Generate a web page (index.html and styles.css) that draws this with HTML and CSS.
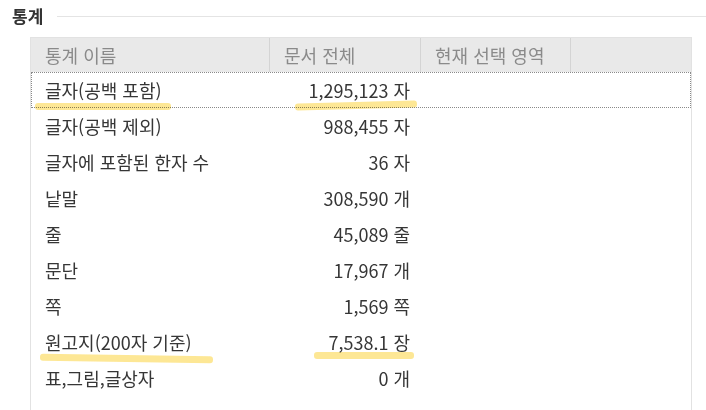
FILE: index.html
```html
<!DOCTYPE html>
<html lang="ko">
<head>
<meta charset="utf-8">
<title>통계</title>
<link rel="stylesheet" href="styles.css">
</head>
<body>
<section class="stats">
  <div class="title-row">
    <h2 class="title">통계</h2>
    <div class="title-line"></div>
  </div>
  <div class="table">
    <div class="head">
      <div class="hcell">통계 이름</div>
      <div class="hcell">문서 전체</div>
      <div class="hcell">현재 선택 영역</div>
      <div class="hcell last"></div>
    </div>
    <div class="row focused">
      <div class="cell name">글자(공백 포함)</div>
      <div class="cell val">1,295,123 자</div>
      <div class="cell"></div>
      <div class="cell"></div>
      <span class="mark mark-a"></span>
      <span class="mark mark-b"></span>
    </div>
    <div class="row">
      <div class="cell name">글자(공백 제외)</div>
      <div class="cell val">988,455 자</div>
      <div class="cell"></div>
      <div class="cell"></div>
    </div>
    <div class="row">
      <div class="cell name">글자에 포함된 한자 수</div>
      <div class="cell val">36 자</div>
      <div class="cell"></div>
      <div class="cell"></div>
    </div>
    <div class="row">
      <div class="cell name">낱말</div>
      <div class="cell val">308,590 개</div>
      <div class="cell"></div>
      <div class="cell"></div>
    </div>
    <div class="row">
      <div class="cell name">줄</div>
      <div class="cell val">45,089 줄</div>
      <div class="cell"></div>
      <div class="cell"></div>
    </div>
    <div class="row">
      <div class="cell name">문단</div>
      <div class="cell val">17,967 개</div>
      <div class="cell"></div>
      <div class="cell"></div>
    </div>
    <div class="row">
      <div class="cell name">쪽</div>
      <div class="cell val">1,569 쪽</div>
      <div class="cell"></div>
      <div class="cell"></div>
    </div>
    <div class="row">
      <div class="cell name">원고지(200자 기준)</div>
      <div class="cell val">7,538.1 장</div>
      <div class="cell"></div>
      <div class="cell"></div>
      <span class="mark mark-c"></span>
      <span class="mark mark-d"></span>
    </div>
    <div class="row">
      <div class="cell name">표,그림,글상자</div>
      <div class="cell val">0 개</div>
      <div class="cell"></div>
      <div class="cell"></div>
    </div>
  </div>
</section>
</body>
</html>
```

FILE: styles.css
```css
html, body {
  margin: 0;
  padding: 0;
  background: #ffffff;
  height: 410px;
  overflow: hidden;
}

body {
  font-family: "Noto Sans CJK KR", "Noto Sans", sans-serif;
  color: #333333;
}

.stats {
  display: flex;
  flex-direction: column;
  height: 410px;
}

.title-row {
  display: flex;
  align-items: center;
  height: 32px;
  padding-left: 12px;
}

.title {
  margin: 0;
  font-size: 17px;
  font-weight: 700;
  color: #333333;
  line-height: 20px;
}

.title-line {
  flex: 1;
  margin-left: 14px;
  border-top: 1px solid #e4e4e4;
}

.table {
  flex: 1;
  margin: 5px 14px 0 30px;
  border: 1px solid #e2e2e2;
  border-bottom: none;
  display: flex;
  flex-direction: column;
}

.head,
.row {
  display: grid;
  grid-template-columns: 239px 151px 150px 1fr;
}

.head {
  height: 34px;
  background: #e9e9e9;
}

.hcell {
  display: flex;
  align-items: center;
  padding-left: 14px;
  font-size: 18px;
  color: #8a8a8a;
  border-right: 1px solid #d4d4d4;
  white-space: nowrap;
}

.hcell.last {
  border-right: none;
}

.row {
  position: relative;
  height: 36px;
}

.row.focused {
  outline: 1px dotted #8a8a8a;
  outline-offset: -1px;
}

.cell {
  display: flex;
  align-items: center;
  font-size: 18px;
  color: #363636;
  white-space: nowrap;
}

.cell.name {
  padding-left: 14px;
}

.cell.val {
  justify-content: flex-end;
  padding-right: 11px;
}

.mark {
  position: absolute;
  height: 7px;
  background: #fde58a;
  mix-blend-mode: multiply;
  border-radius: 3px;
  opacity: 0.9;
}

.mark-a {
  left: 4px;
  top: 31px;
  width: 136px;
}

.mark-b {
  left: 264px;
  top: 30px;
  width: 122px;
  transform: rotate(-1.5deg);
}

.mark-c {
  left: 9px;
  top: 31px;
  width: 173px;
  transform: rotate(0.8deg);
}

.mark-d {
  left: 283px;
  top: 28px;
  width: 100px;
}
```
